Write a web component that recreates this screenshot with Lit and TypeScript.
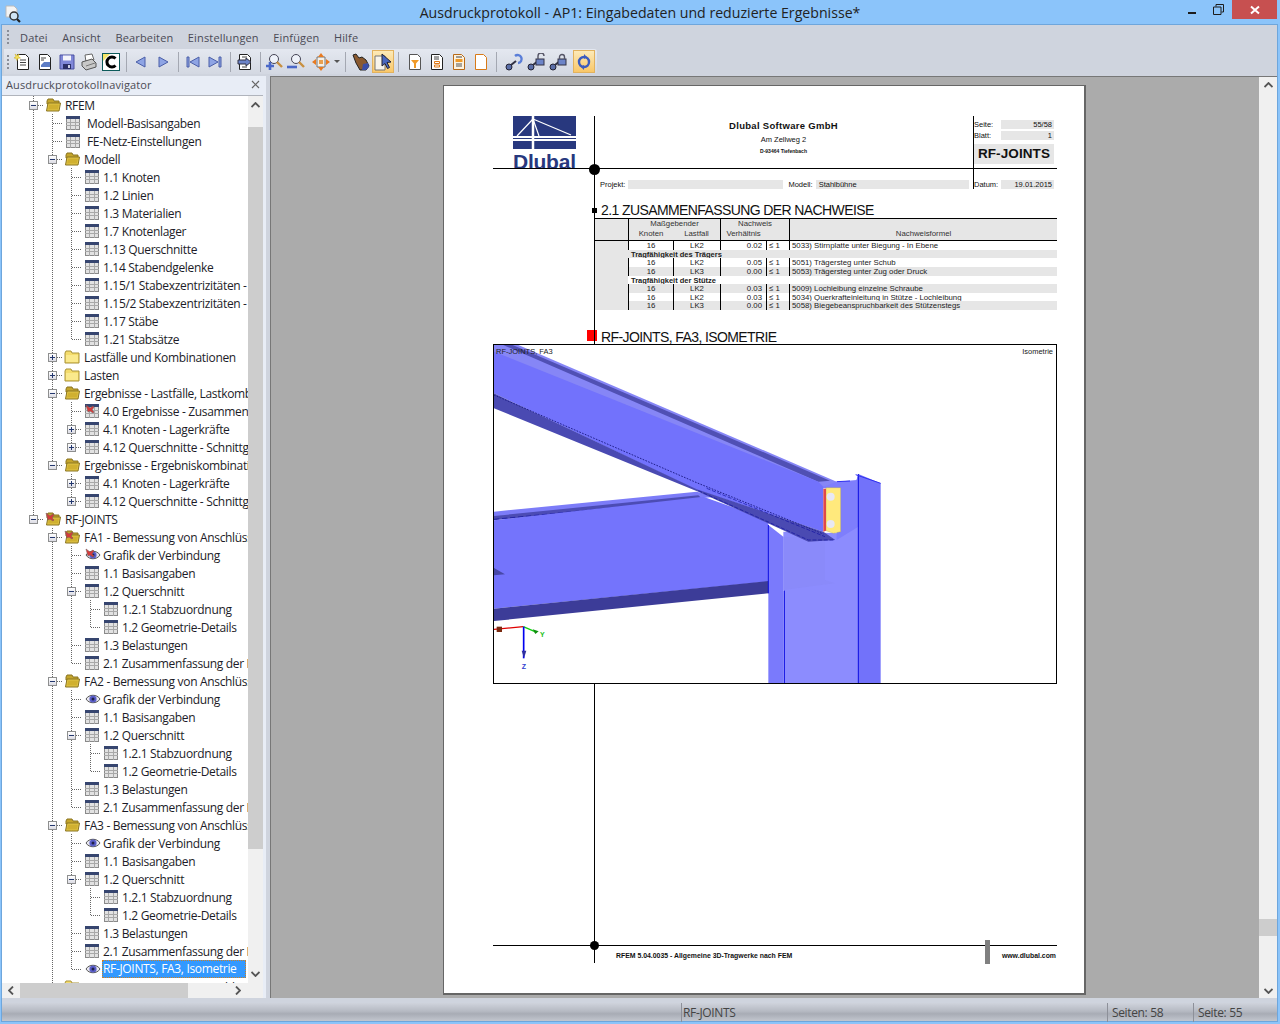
import { LitElement, css, html, svg } from "lit";
import { customElement } from "lit/decorators.js";

type IconName = "open" | "closed" | "table" | "eye";
type Row = { d: number; label: string; icon: IconName; exp?: "+" | "-"; pin?: boolean; sel?: boolean; wide?: boolean };

const fa = (name: string, pinned: boolean, last: Row[] = []): Row[] => [
  { d: 1, label: `${name} - Bemessung von Anschlüssen`, icon: "open", exp: "-", pin: pinned },
  { d: 2, label: "Grafik der Verbindung", icon: "eye", pin: pinned },
  { d: 2, label: "1.1 Basisangaben", icon: "table" },
  { d: 2, label: "1.2 Querschnitt", icon: "table", exp: "-" },
  { d: 3, label: "1.2.1 Stabzuordnung", icon: "table" },
  { d: 3, label: "1.2 Geometrie-Details", icon: "table" },
  { d: 2, label: "1.3 Belastungen", icon: "table" },
  { d: 2, label: "2.1 Zusammenfassung der Nachweise", icon: "table" },
  ...last,
];

const rows: Row[] = [
  { d: 0, label: "RFEM", icon: "open", exp: "-" },
  { d: 1, label: "Modell-Basisangaben", icon: "table", wide: true },
  { d: 1, label: "FE-Netz-Einstellungen", icon: "table", wide: true },
  { d: 1, label: "Modell", icon: "open", exp: "-" },
  ...[
    "1.1 Knoten", "1.2 Linien", "1.3 Materialien", "1.7 Knotenlager", "1.13 Querschnitte",
    "1.14 Stabendgelenke", "1.15/1 Stabexzentrizitäten - Exzentrizität", "1.15/2 Stabexzentrizitäten - Exzentrizität",
    "1.17 Stäbe", "1.21 Stabsätze",
  ].map((label): Row => ({ d: 2, label, icon: "table" })),
  { d: 1, label: "Lastfälle und Kombinationen", icon: "closed", exp: "+" },
  { d: 1, label: "Lasten", icon: "closed", exp: "+" },
  { d: 1, label: "Ergebnisse - Lastfälle, Lastkombinationen", icon: "open", exp: "-" },
  { d: 2, label: "4.0 Ergebnisse - Zusammenfassung", icon: "table", pin: true },
  { d: 2, label: "4.1 Knoten - Lagerkräfte", icon: "table", exp: "+" },
  { d: 2, label: "4.12 Querschnitte - Schnittgrößen", icon: "table", exp: "+" },
  { d: 1, label: "Ergebnisse - Ergebniskombinationen", icon: "open", exp: "-" },
  { d: 2, label: "4.1 Knoten - Lagerkräfte", icon: "table", exp: "+" },
  { d: 2, label: "4.12 Querschnitte - Schnittgrößen", icon: "table", exp: "+" },
  { d: 0, label: "RF-JOINTS", icon: "open", exp: "-", pin: true },
  ...fa("FA1", true),
  ...fa("FA2", false),
  ...fa("FA3", false, [{ d: 2, label: "RF-JOINTS, FA3, Isometrie", icon: "eye", sel: true }]),
  { d: 1, label: "FA4 - Bemessung von Anschlüssen", icon: "closed", exp: "+" },
];

// is there a later sibling at this level
const continues = (i: number, level: number) => {
  for (let j = i + 1; j < rows.length; j++) {
    if (rows[j].d < level) return false;
    if (rows[j].d === level) return true;
  }
  return false;
};

const pin = svg`<path d="M1 1l4 3 3-2 1 1-2 3 2 2-1 1-3-2-2 1z" fill="#d83a3a" stroke="#7a5a5a" stroke-width=".6"/>`;

const treeIcon = (r: Row) => {
  if (r.icon === "table")
    return html`<svg width="14" height="14" viewBox="0 0 14 14">
      <rect x=".5" y=".5" width="13" height="13" fill="#e2e2e2" stroke="#8a8a8a"/>
      <rect x="0" y="0" width="14" height="3" fill="#36456f"/>
      <path d="M0 6.500h14M0 9.500h14M4.500 3v11M9.500 3v11" stroke="#a8a8a8"/>
      ${r.pin ? pin : ""}
    </svg>`;
  if (r.icon === "eye")
    return html`<svg width="16" height="14" viewBox="0 0 16 14">
      <path d="M1 7c3-5 11-5 14 0-3 5-11 5-14 0z" fill="#e8e8f0" stroke="#555"/>
      <circle cx="8" cy="7" r="3.600" fill="#5a5ec8"/><circle cx="8" cy="7" r="1.500" fill="#20204a"/>
      ${r.pin ? pin : ""}
    </svg>`;
  if (r.icon === "closed")
    return html`<svg width="16" height="14" viewBox="0 0 16 14">
      <path d="M1 3l1-2h5l1 2h7v10H1z" fill="#f4dc6c" stroke="#a89238"/>
      <path d="M2 5h12v7H2z" fill="#fae98c"/>
    </svg>`;
  return html`<svg width="16" height="14" viewBox="0 0 16 14">
    <path d="M2 3l1-2h5l1 2h5v3H2z" fill="#c4a52c" stroke="#8a7420"/>
    <path d="M3 5h12.500L14 13H1.500z" fill="#e2c648" stroke="#8a7420"/>
    <path d="M4 6.500h10l-1 5H3z" fill="#d0b030"/>
    ${r.pin ? pin : ""}
  </svg>`;
};

// toolbar glyphs, all on a 18 box
const sheet = (inner: unknown, stroke = "#222", fill = "#fff") => html`<svg width="18" height="18" viewBox="0 0 18 18">
  <path d="M3.500 1.500h8l3 3v12h-11z" fill=${fill} stroke=${stroke}/>${inner}</svg>`;
const lines = svg`<path d="M6 7h6M6 9.500h6M6 12h6" stroke="#444"/>`;
const arrow = (d: string) => html`<svg width="18" height="18" viewBox="0 0 18 18"><path d=${d} fill="#8ea4e4" stroke="#4a5ea8"/></svg>`;
const lens = (extra: unknown) => html`<svg width="20" height="18" viewBox="0 0 20 18">
  <circle cx="9" cy="6" r="4.500" fill="#eef2fa" stroke="#445"/>
  <path d="M12 9l5 5" stroke="#c89040" stroke-width="2.400"/>${extra}</svg>`;
const link = (d: string) => html`<svg width="20" height="18" viewBox="0 0 20 18">
  <circle cx="5" cy="14" r="3" fill="#5a6ea8" stroke="#223"/><path d="M7 12l5-4" stroke="#334" stroke-width="2"/>${d === "round"
    ? svg`<path d="M11 3a4 4 0 1 1 3 7" fill="none" stroke="#5a7ed8" stroke-width="2.400"/>`
    : svg`<rect x="10" y="6" width="8" height="6" fill="#6c84c8" stroke="#334"/><path d=${d} fill="none" stroke="#556" stroke-width="1.400"/>`}</svg>`;

const tb = {
  neu: sheet(svg`${lines}<path d="M1 1l2 1.500L5 1 4.500 3.500 6.500 5 4 5.200 3 7.500 2 5.200 0 5l2-1.500z" fill="#f6e25a" stroke="#c8a820" stroke-width=".5"/>`),
  open: sheet(svg`<path d="M5 5h5M5 7h3" stroke="#444"/><path d="M5 12l3-3h6v5H5z" fill="#5c7cc4"/>`),
  save: html`<svg width="18" height="18" viewBox="0 0 18 18"><path d="M2 2h14v14H2z" fill="#8088d8" stroke="#4a50a0"/><path d="M5 2.500h8v5H5z" fill="#f4f4fa"/><path d="M5 11h8v5H5z" fill="#2c3068"/><path d="M10 12h2v3h-2z" fill="#cfd2e8"/></svg>`,
  print: html`<svg width="18" height="18" viewBox="0 0 18 18"><path d="M5 2l7-1 2 6-8 2z" fill="#fff" stroke="#666"/><path d="M2 9l10-3 4 4v4l-10 3-4-4z" fill="#c8c8c8" stroke="#555"/><path d="M6 13l9-3" stroke="#777"/></svg>`,
  color: html`<svg width="18" height="18" viewBox="0 0 18 18"><rect x=".5" y=".5" width="17" height="17" fill="#fff" stroke="#0c5a5a"/><path d="M1 1h7L1 8z" fill="#f6e66a"/><path d="M13.500 5.500a5 5 0 1 0 0 7" fill="none" stroke="#000" stroke-width="3"/></svg>`,
  prev: arrow("M13 4v10L4 9z"),
  next: arrow("M5 4v10l9-5z"),
  first: arrow("M3 4h2v10H3zM15 4v10L6 9z"),
  last: arrow("M15 4h-2v10h2zM3 4v10l9-5z"),
  goto: sheet(svg`<path d="M6 4h5M6 14h5" stroke="#444"/><path d="M2 7h8V5l5 4-5 4v-2H2z" fill="#6c84c8" stroke="#334"/>`),
  zoomIn: lens(svg`<path d="M1 13h8M5 9v8" stroke="#4a68c8" stroke-width="2.600"/>`),
  zoomOut: lens(svg`<path d="M0 14h10" stroke="#4a68c8" stroke-width="2.600"/>`),
  fit: html`<svg width="18" height="18" viewBox="0 0 18 18"><path d="M5 4h8v10H5z" fill="#f4f0e8" stroke="#777"/><path d="M9 0l3 4H6zM9 18l-3-4h6zM0 9l4-3v6zM18 9l-4 3V6z" fill="#e87a20"/><path d="M7 7h4v4H7z" fill="#e8a050"/></svg>`,
  hand: html`<svg width="20" height="18" viewBox="0 0 20 18"><path d="M2 2l3-1 3 4 3-1 4 3 3 6-3 4H9L5 10z" fill="#8a5a30" stroke="#222"/><path d="M12 11l5-1 1 4-3 3h-4z" fill="#3a4ea8"/></svg>`,
  pointer: html`<svg width="20" height="18" viewBox="0 0 20 18"><path d="M2 3h10v14H2z" fill="#f8f4ea" stroke="#777"/><path d="M9 1l9 8-4 .5 2.500 5-2 1-2.500-5L9 13z" fill="#4a68c0" stroke="#223"/></svg>`,
  filter: sheet(svg`<path d="M5 7h8l-3 3.500V15H8v-4.500z" fill="#f09a28"/>`, "#555"),
  page1: sheet(svg`<path d="M6 4h5M6 6h5" stroke="#444"/><path d="M6.500 8.500h5v2h-5zM6.500 12h5v2h-5z" fill="none" stroke="#e07a18"/>`),
  page2: sheet(svg`<path d="M6 4h6" stroke="#444"/><path d="M5.500 6h7v3h-7z" fill="#f09a28"/><path d="M6 11h6M6 13h6" stroke="#555"/>`, "#b86a18", "#fdf3e0"),
  page3: sheet("", "#d87a18"),
  linkA: link("round"),
  linkB: link("M12 6V3a3 3 0 0 1 6 0"),
  linkC: link("M11.500 6V4a2.500 2.500 0 0 1 5 0v2"),
  sync: html`<svg width="18" height="18" viewBox="0 0 18 18"><circle cx="9" cy="9" r="5" fill="none" stroke="#3c5cc0" stroke-width="2.400"/><path d="M9 1l3 3-3 2zM9 17l-3-3 3-2z" fill="#3c5cc0"/></svg>`,
};

type Tool = keyof typeof tb | "|" | "v";
const tools: { t: Tool; on?: boolean; nudge?: string }[] = [
  { t: "neu" }, { t: "open" }, { t: "save" }, { t: "print" }, { t: "color" }, { t: "|" },
  { t: "prev" }, { t: "next" }, { t: "|" }, { t: "first" }, { t: "last" }, { t: "|" }, { t: "goto" }, { t: "|" },
  { t: "zoomIn" }, { t: "zoomOut" }, { t: "fit", nudge: "push2" }, { t: "v" }, { t: "|" },
  { t: "hand", nudge: "push1" }, { t: "pointer", on: true }, { t: "|" },
  { t: "filter", nudge: "push2" }, { t: "page1" }, { t: "page2" }, { t: "page3" }, { t: "|" },
  { t: "linkA", nudge: "push3" }, { t: "linkB" }, { t: "linkC" }, { t: "|", nudge: "pull4" }, { t: "sync", on: true },
];

const results: (string[] | string)[] = [
  ["16", "LK2", "0.02", "5033) Stirnplatte unter Biegung - In Ebene"],
  "Tragfähigkeit des Trägers",
  ["16", "LK2", "0.05", "5051) Trägersteg unter Schub"],
  ["16", "LK3", "0.00", "5053) Trägersteg unter Zug oder Druck"],
  "Tragfähigkeit der Stütze",
  ["16", "LK2", "0.03", "5009) Lochleibung einzelne Schraube"],
  ["16", "LK2", "0.03", "5034) Querkrafteinleitung in Stütze - Lochleibung"],
  ["16", "LK3", "0.00", "5058) Biegebeanspruchbarkeit des Stützenstegs"],
];

const arrowUp = html`<svg width="9" height="6" viewBox="0 0 9 6"><path d="M.5 5l4-4 4 4" fill="none" stroke="#555" stroke-width="1.800"/></svg>`;
const arrowDown = html`<svg width="9" height="6" viewBox="0 0 9 6"><path d="M.5 1l4 4 4-4" fill="none" stroke="#555" stroke-width="1.800"/></svg>`;
const arrowLeft = html`<svg width="6" height="9" viewBox="0 0 6 9"><path d="M5 .5l-4 4 4 4" fill="none" stroke="#555" stroke-width="1.800"/></svg>`;
const arrowRight = html`<svg width="6" height="9" viewBox="0 0 6 9"><path d="M1 .5l4 4-4 4" fill="none" stroke="#555" stroke-width="1.800"/></svg>`;

@customElement("app-root")
export class AppRoot extends LitElement {
  static styles = css`
    :host {
      display: block;
      width: 1280px;
      height: 1024px;
      overflow: hidden;
      font-family: "Open Sans", "Noto Sans", sans-serif;
      background: #8bc4fa;
    }
    .window { height: 100%; display: flex; flex-direction: column; }

    .title { height: 24px; flex: none; display: flex; align-items: flex-start; padding: 0 3px 0 5px; }
    .title .app { width: 16px; height: 20px; margin-top: 5px; }
    .title .text { flex: 1; text-align: center; font-size: 14.150px; line-height: 26px; color: #222; padding-left: 80px; }
    .ctl { width: 26px; height: 19px; display: flex; align-items: center; justify-content: center; }
    .ctl.close { width: 45px; margin-left: 1px; background: #c75050; }

    .body {
      flex: 1; min-height: 0; display: flex; flex-direction: column;
      margin: 0 2px 2px 1px;
      border: 1px solid #6ea6dc;
      background: #cfd4de;
    }
    .menu { height: 24px; flex: none; display: flex; align-items: center; gap: 14.500px; padding-left: 15px; font-size: 11px; color: #4a4a55; letter-spacing: .15px; }
    .grip { width: 2px; height: 14px; background: repeating-linear-gradient(to bottom, #8a8e98 0 2px, transparent 2px 4px); flex: none; }
    .menu .grip { margin: 0 -3.500px 0 -10px; }
    .tools { height: 25px; flex: none; display: flex; align-items: center; width: 593px; padding-left: 3px; box-sizing: border-box; background: linear-gradient(#e4e8f0, #d3d8e2); border-radius: 0 3px 3px 0; margin-left: 2px; }
    .tools .grip { margin-right: 3px; }
    .tool { width: 22px; height: 23px; flex: none; display: flex; align-items: center; justify-content: center; box-sizing: border-box; }
    .tool.on { background: linear-gradient(#fdeab8, #f9c768); border: 1px solid #e2b25e; }
    .sep { width: 1px; height: 20px; margin: 0 3.500px; background: #a4a8b2; flex: none; }
    .caret { width: 9px; flex: none; display: flex; justify-content: center; }
    .caret::before { content: ""; border: 3px solid transparent; border-top: 3px solid #555; margin-top: 3px; }
    .push1 { margin-left: 1px; }
    .push2 { margin-left: 2px; }
    .push3 { margin-left: 3px; }
    .sep.pull4 { margin-right: -.5px; }

    .main { flex: 1; min-height: 0; display: flex; border-top: 2px solid #cfd4de; }
    .side { width: 264px; flex: none; display: flex; flex-direction: column; background: #e8edf6; }
    .side-head { height: 19px; flex: none; display: flex; align-items: center; justify-content: space-between; padding: 0 6px 2px 4px; box-sizing: border-box; font-size: 11px; color: #4c4c54; letter-spacing: .12px; }
    .tree-wrap { flex: 1; min-height: 0; display: grid; grid-template-columns: 246px 15px; grid-template-rows: 1fr 15px; margin-right: 3px; background: #fff; border-top: 1px solid #b0b4bc; }
    .tree { overflow: hidden; padding-left: 22px; }
    .row { height: 18px; display: flex; align-items: center; font-size: 12px; color: #1c1c28; white-space: nowrap; letter-spacing: -.33px; }
    .cell { width: 19px; height: 18px; flex: none; display: flex; align-items: center; justify-content: center; }
    .dots-v { background: repeating-linear-gradient(to bottom, #666 0 1px, transparent 1px 2px) 9px 0 / 1px 100% no-repeat; }
    .dots-c {
      background:
        repeating-linear-gradient(to bottom, #666 0 1px, transparent 1px 2px) 9px 0 / 1px 9px no-repeat,
        repeating-linear-gradient(to right, #666 0 1px, transparent 1px 2px) 10px 9px / 9px 1px no-repeat;
    }
    .dots-t {
      background:
        repeating-linear-gradient(to bottom, #666 0 1px, transparent 1px 2px) 9px 0 / 1px 100% no-repeat,
        repeating-linear-gradient(to right, #666 0 1px, transparent 1px 2px) 10px 9px / 9px 1px no-repeat;
    }
    .exp { width: 9px; height: 9px; box-sizing: border-box; border: 1px solid #8e8f8f; background: linear-gradient(#fff, #dcdce4); display: flex; align-items: center; justify-content: center; color: #23376e; }
    .slot { width: 22px; flex: none; height: 18px; display: flex; align-items: center; padding-left: 4px; box-sizing: border-box; }
    .slot.folder { padding-left: 2px; }
    .label.wide { padding-left: 3px; }
    .row.sel .label { background: #3399ff; color: #fff; margin-left: -1px; padding: 0 5px 0 1px; line-height: 18px; width: 138px; outline: 1px dotted #d08020; outline-offset: -1px; }

    .vbar, .hbar { background: #f0f0f0; display: flex; align-items: center; justify-content: space-between; }
    .vbar { flex-direction: column; }
    .vbar .btn { height: 31px; width: 100%; display: flex; align-items: flex-start; justify-content: center; background: #f0f0f0; flex: none; padding-top: 6px; box-sizing: border-box; }
    .vbar .btn.down { height: 18px; }
    .vbar .track { flex: 1; width: 100%; display: flex; flex-direction: column; }
    .vbar .thumb { height: 722px; background: #cdcdcd; flex: none; }
    .hbar { grid-column: 1 / 3; padding-left: 6px; justify-content: flex-start; }
    .hbar .thumb { width: 168px; height: 15px; background: #cdcdcd; margin: 0 47px 0 6px; }

    .view { flex: 1; min-width: 0; display: flex; margin-left: 4px; background: #ababab; border-top: 1px solid #777; border-left: 1px solid #777; }
    .canvas { flex: 1; padding: 8px 0 0 172px; min-width: 0; overflow: hidden; }
    .page {
      width: 643px; height: 910px; box-sizing: border-box; background: #fff;
      border: 1px solid #666; border-width: 1px 2px 2px 1px;
      padding: 30px 0 0 49px; display: flex; flex-direction: column;
      position: relative; font-family: "Liberation Sans", Arial, sans-serif; color: #111;
    }
    .vline { position: absolute; left: 150px; top: 30px; width: 1px; height: 847px; background: #000; }
    .dot { position: absolute; width: 11px; height: 11px; border-radius: 50%; background: #000; left: 145px; }
    .dot.a { top: 78px; }
    .dot.b { top: 855px; width: 9px; height: 9px; left: 146px; }
    .bar { position: absolute; left: 541px; top: 854px; width: 5px; height: 24px; background: #808080; }

    .head { width: 564px; display: grid; grid-template-columns: 101px 379px 84px; grid-template-rows: 53px 22px; }
    .logo { border-bottom: 1px solid #000; height: 53px; box-sizing: border-box; padding-left: 20px; }
    .logo svg { display: block; }
    .firm { border-bottom: 1px solid #000; text-align: center; padding: 4px 0 0 0; }
    .firm b { display: block; font-size: 9.500px; line-height: 12px; letter-spacing: .3px; }
    .firm span { display: block; font-size: 7.500px; line-height: 13px; margin-top: 1px; }
    .firm small { display: block; font-size: 5px; line-height: 11px; font-weight: bold; }
    .meta { border-bottom: 1px solid #000; border-left: 1px solid #000; box-sizing: border-box; padding: 4px 3px 0 0; font-size: 7.500px; }
    .pair { display: flex; height: 9px; margin-bottom: 2px; align-items: center; }
    .pair span { width: 27px; flex: none; }
    .pair em { flex: 1; background: #e6e6e6; font-style: normal; text-align: right; padding-right: 2px; line-height: 9px; height: 9px; }
    .stamp { background: #e6e6e6; font-weight: bold; font-size: 13.500px; line-height: 20px; text-align: center; margin-top: 4px; letter-spacing: .1px; }
    .proj { grid-column: 2; display: flex; align-items: flex-end; padding-left: 6px; font-size: 7.500px; gap: 3px; height: 20px; }
    .proj em { font-style: normal; background: #e6e6e6; height: 9px; line-height: 9px; padding-left: 3px; box-sizing: border-box; }
    .proj em.p { width: 155px; margin-right: 2px; }
    .proj em.m { width: 153px; }
    .proj span { flex: none; line-height: 9px; }
    .date { grid-column: 3; border-left: 1px solid #000; display: flex; align-items: flex-end; font-size: 7.500px; padding-right: 3px; height: 20px; }
    .date span { width: 27px; flex: none; line-height: 9px; }
    .date em { flex: 1; background: #e6e6e6; font-style: normal; text-align: right; padding-right: 2px; height: 9px; line-height: 9px; }

    .h { display: flex; align-items: center; margin: 12px 0 0 94px; font-size: 14px; line-height: 15px; letter-spacing: -.6px; color: #111; white-space: nowrap; }
    .gutter { width: 14px; flex: none; display: flex; justify-content: flex-end; padding-right: 4px; box-sizing: border-box; }
    .mark { width: 5px; height: 5px; background: #000; }
    .mark.red { width: 10px; height: 11px; background: #f00; margin-top: -4px; }
    .h.two { margin-top: 20px; line-height: 14px; }

    .tbl { margin: 0 0 0 102px; width: 462px; font-size: 7.800px; color: #222; }
    .thead { display: grid; grid-template-columns: 33px 45px 47px 46px 23px 1fr; grid-template-rows: 10px 11px; background: #e6e6e6; border-top: 1px solid #000; border-bottom: 1px solid #000; color: #333; text-align: center; }
    .thead div { line-height: 10px; }
    .thead .g { grid-column: span 2; }
    .thead .lb { border-left: 1px solid #000; }
    .tr { display: grid; grid-template-columns: 33px 45px 47px 46px 23px 1fr; height: 8.625px; line-height: 10.500px; white-space: nowrap; }
    .tr.alt > div:not(.stub) { background: #e6e6e6; }
    .tr > div { border-left: 1px solid #000; box-sizing: border-box; overflow: hidden; height: 8.625px; }
    .tr > .stub { background: #e6e6e6; border-left: 0; }
    .tr .c { text-align: center; }
    .tr .r { text-align: right; padding-right: 4px; }
    .tr .f { padding-left: 2px; }
    .tr .sec { grid-column: 2 / 7; border-left: 0; font-weight: bold; font-size: 7.500px; padding-left: 3px; }

    .gfx { position: relative; width: 564px; height: 340px; box-sizing: border-box; border: 1px solid #000; background: #fff; overflow: hidden; flex: none; display: grid; font-size: 7.500px; }
    .gfx > * { grid-area: 1 / 1; }
    .gfx svg { display: block; width: 562px; height: 338px; }
    .cap { display: flex; justify-content: space-between; align-self: start; padding: 2px 3px 0 2px; color: #222; }

    .foot { margin-top: auto; height: 48px; width: 564px; box-sizing: border-box; border-top: 1px solid #000; display: flex; justify-content: space-between; padding: 5px 1px 0 123px; font-size: 6.900px; font-weight: bold; line-height: 9px; flex: none; }

    .mainbar { width: 18px; flex: none; background: #f0f0f0; display: flex; flex-direction: column; align-items: center; padding: 5px 0 4px; box-sizing: border-box; }
    .mainbar .fill { flex: 1; display: flex; flex-direction: column; justify-content: flex-end; width: 100%; padding-bottom: 52px; box-sizing: border-box; }
    .mainbar .thumb { height: 17px; background: #cdcdcd; }

    .status { height: 18px; flex: none; margin-top: 5px; display: grid; grid-template-columns: 679px 426px 86px 1fr; background: linear-gradient(#cfd3dc, #b6bac3 45%, #a8acb5 60%, #c2c6ce); font-size: 12px; line-height: 19px; color: #444; letter-spacing: -.35px; }
    .status div { border-left: 1px solid #8d9099; padding-left: 4px; }
    .status div:first-child { border-left: 0; }
    .status div:nth-child(2) { padding-left: 1px; }
  `;

  renderRow(r: Row, i: number) {
    const cells = [];
    for (let l = 0; l <= r.d; l++) {
      const more = continues(i, l);
      let cls = "";
      if (l === r.d) cls = more ? "dots-t" : "dots-c";
      else if (more) cls = "dots-v";
      if (i === 0 && l === 0) cls = "dots-t";
      cells.push(html`<div class="cell ${cls}">
        ${l === r.d && r.exp
          ? html`<div class="exp">
              <svg width="7" height="7" viewBox="0 0 7 7"><path d=${r.exp === "+" ? "M1 3.500h5M3.500 1v5" : "M1 3.500h5"} stroke="#23376e"/></svg>
            </div>`
          : ""}
      </div>`);
    }
    return html`<div class="row ${r.sel ? "sel" : ""}">
      ${cells}
      <div class="slot ${r.icon === "table" || r.icon === "eye" ? "" : "folder"}">${treeIcon(r)}</div>
      <div class="label ${r.wide ? "wide" : ""}">${r.label}</div>
    </div>`;
  }

  renderToolbar() {
    return tools.map((x) => {
      if (x.t === "|") return html`<div class="sep ${x.nudge ?? ""}"></div>`;
      if (x.t === "v") return html`<div class="caret"></div>`;
      return html`<div class="tool ${x.on ? "on" : ""} ${x.nudge ?? ""}">${tb[x.t]}</div>`;
    });
  }

  renderHeader() {
    return html`<div class="head">
      <div class="logo">
        <svg width="63" height="52" viewBox="0 0 63 52">
          <rect width="63" height="33" fill="#28387e"/>
          <path d="M0 21h63M0 24h63" stroke="#fff" stroke-width="2"/>
          <path d="M20 0v33" stroke="#fff" stroke-width="2.500"/>
          <path d="M20 3L4 20M20 3l6 17M20 3l38 16" stroke="#fff" stroke-width="1.200" fill="none"/>
          <text x="0" y="52.500" font-family="Liberation Sans" font-weight="bold" font-size="21" fill="#28387e" textLength="63">Dlubal</text>
        </svg>
      </div>
      <div class="firm"><b>Dlubal Software GmbH</b><span>Am Zellweg 2</span><small>D-93464 Tiefenbach</small></div>
      <div class="meta">
        <div class="pair"><span>Seite:</span><em>55/58</em></div>
        <div class="pair"><span>Blatt:</span><em>1</em></div>
        <div class="stamp">RF-JOINTS</div>
      </div>
      <div class="proj"><span>Projekt:</span><em class="p"></em><span>Modell:</span><em class="m">Stahlbühne</em></div>
      <div class="date"><span>Datum:</span><em>19.01.2015</em></div>
    </div>`;
  }

  renderTable() {
    return html`<div class="tbl">
      <div class="thead">
        <div></div><div class="g lb">Maßgebender</div><div class="g lb">Nachweis</div><div class="lb"></div>
        <div></div><div class="lb">Knoten</div><div>Lastfall</div><div class="lb">Verhältnis</div><div></div><div class="lb">Nachweisformel</div>
      </div>
      ${results.map((r, i) =>
        typeof r === "string"
          ? html`<div class="tr ${i % 2 ? "alt" : ""}"><div class="stub"></div><div class="sec">${r}</div></div>`
          : html`<div class="tr ${i % 2 ? "alt" : ""}">
              <div class="stub"></div><div class="c">${r[0]}</div><div class="c">${r[1]}</div>
              <div class="r">${r[2]}</div><div class="f">≤ 1</div><div class="f">${r[3]}</div>
            </div>`
      )}
    </div>`;
  }

  // model picture, coordinates taken from a 3x view of the print
  renderModel() {
    return html`<svg viewBox="12 15 1686 1014">
      <path d="M835 555L880 590V1030H835z" fill="#7a7afc"/>
      <path d="M880 575L1050 580 1105 402V1030H880z" fill="#8c8cfe"/>
      <path d="M1105 402L1172 430V1030H1105z" fill="#7272fa"/>
      <path d="M1040 425L1100 420 1105 402V560L1040 600z" fill="#7e7efc"/>
      <path d="M880 590H1005V720L1035 730 880 750z" fill="#8a8afa"/>

      <path d="M12 515L620 455 680 470 12 530z" fill="#7c7cf8"/>
      <path d="M12 528L625 466 640 480 12 541z" fill="#4c4cb4"/>
      <path d="M12 538L630 478" stroke="#1010a0" stroke-width="2" stroke-dasharray="16 8" fill="none"/>
      <path d="M12 541L640 470 835 540V725L12 806z" fill="#7474fc"/>
      <path d="M12 806L835 723V760L12 843z" fill="#3c3c98"/>
      <path d="M12 684L45 703 12 706z" fill="#4848a8"/>
      <path d="M835 555V760" stroke="#0808e0" stroke-width="3"/>
      <path d="M883 752V1030M1105 402V1030" stroke="#0808e0" stroke-width="3"/>
      <path d="M1040 425L1080 423M1097 404L1172 430" stroke="#3030f0" stroke-width="3" fill="none"/>

      <path d="M985 425H1040L1052 445H1000z" fill="#7e7efc"/>
      <path d="M12 15H85L1040 425 1000 440 12 50z" fill="#8686f6"/>
      <path d="M40 15H68L1020 422 985 425z" fill="#5050b4"/>
      <path d="M12 35L985 425 1000 440V575L620 450 12 160z" fill="#7272fc"/>
      <path d="M12 160L620 448 1000 575 1036 600 955 605 625 455 12 205z" fill="#4a4ab2"/>
      <path d="M12 165L620 428 1000 582" stroke="#20208c" stroke-width="3" stroke-dasharray="5 4" fill="none"/>
      <path d="M625 452L955 600H1030M650 445L1005 590" stroke="#1010a0" stroke-width="2" stroke-dasharray="12 5" fill="none"/>

      <path d="M1008 443H1052V575L1030 580 1008 572z" fill="#ffe97c" stroke="#a89a50"/>
      <path d="M1000 446H1008V572L1000 575z" fill="#e04848"/>
      <circle cx="1022" cy="470" r="12" fill="#e8e8f4"/>
      <circle cx="1022" cy="552" r="12" fill="#e8e8f4"/>

      <path d="M12 868L100 860" stroke="#e00000" stroke-width="4"/>
      <path d="M20 860h16v16H20z" fill="#7a2a10"/>
      <path d="M100 860L140 877" stroke="#10d010" stroke-width="4"/>
      <path d="M128 868l18 6-10 8z" fill="#109010"/>
      <path d="M101 860V955" stroke="#0000f0" stroke-width="5"/>
      <path d="M95 932h14l-7 22z" fill="#3030a0"/>
      <text x="150" y="892" font-size="21" font-weight="bold" fill="#20c020" font-family="Liberation Sans">Y</text>
      <text x="95" y="987" font-size="21" font-weight="bold" fill="#3040d0" font-family="Liberation Sans">Z</text>
    </svg>`;
  }

  renderPage() {
    return html`<div class="page">
      <div class="vline"></div>
      <div class="dot a"></div>
      <div class="dot b"></div>
      <div class="bar"></div>
      ${this.renderHeader()}
      <div class="h"><div class="gutter"><div class="mark"></div></div>2.1 ZUSAMMENFASSUNG DER NACHWEISE</div>
      ${this.renderTable()}
      <div class="h two"><div class="gutter"><div class="mark red"></div></div>RF-JOINTS, FA3, ISOMETRIE</div>
      <div class="gfx">${this.renderModel()}<div class="cap"><span>RF-JOINTS, FA3</span><span>Isometrie</span></div></div>
      <div class="foot"><span>RFEM 5.04.0035 - Allgemeine 3D-Tragwerke nach FEM</span><span>www.dlubal.com</span></div>
    </div>`;
  }

  render() {
    return html`<div class="window">
      <div class="title">
        <svg class="app" viewBox="0 0 16 20">
          <path d="M1 1h8l3 3v8H1z" fill="#f4f4f4" stroke="#bbb"/>
          <circle cx="9" cy="11" r="4" fill="#cfe4f4" stroke="#333" stroke-width="1.500"/>
          <path d="M12 14l3 3" stroke="#222" stroke-width="2.200"/>
        </svg>
        <div class="text">Ausdruckprotokoll - AP1: Eingabedaten und reduzierte Ergebnisse*</div>
        <div class="ctl"><svg width="10" height="10"><path d="M1 8h8" stroke="#1c1c1c" stroke-width="2"/></svg></div>
        <div class="ctl"><svg width="11" height="11"><path d="M3 2.500V.5h7.500V8H8.500M.5 3h7.500v7.500H.5z" fill="none" stroke="#1c1c1c"/></svg></div>
        <div class="ctl close"><svg width="10" height="10"><path d="M1 1.500l8 7M9 1.500l-8 7" stroke="#fff" stroke-width="2"/></svg></div>
      </div>
      <div class="body">
        <div class="menu"><div class="grip"></div>
          <span>Datei</span><span>Ansicht</span><span>Bearbeiten</span><span>Einstellungen</span><span>Einfügen</span><span>Hilfe</span>
        </div>
        <div class="tools"><div class="grip"></div>${this.renderToolbar()}</div>
        <div class="main">
          <div class="side">
            <div class="side-head"><span>Ausdruckprotokollnavigator</span>
              <svg width="9" height="9"><path d="M1 1l7 7M8 1L1 8" stroke="#666" stroke-width="1.200"/></svg>
            </div>
            <div class="tree-wrap">
              <div class="tree">${rows.map((r, i) => this.renderRow(r, i))}</div>
              <div class="vbar">
                <div class="btn">${arrowUp}</div>
                <div class="track"><div class="thumb"></div></div>
                <div class="btn down">${arrowDown}</div>
              </div>
              <div class="hbar">${arrowLeft}<div class="thumb"></div>${arrowRight}</div>
            </div>
          </div>
          <div class="view">
            <div class="canvas">${this.renderPage()}</div>
            <div class="mainbar">
              ${arrowUp}
              <div class="fill"><div class="thumb"></div></div>
              ${arrowDown}
            </div>
          </div>
        </div>
        <div class="status"><div></div><div>RF-JOINTS</div><div>Seiten: 58</div><div>Seite: 55</div></div>
      </div>
    </div>`;
  }
}
